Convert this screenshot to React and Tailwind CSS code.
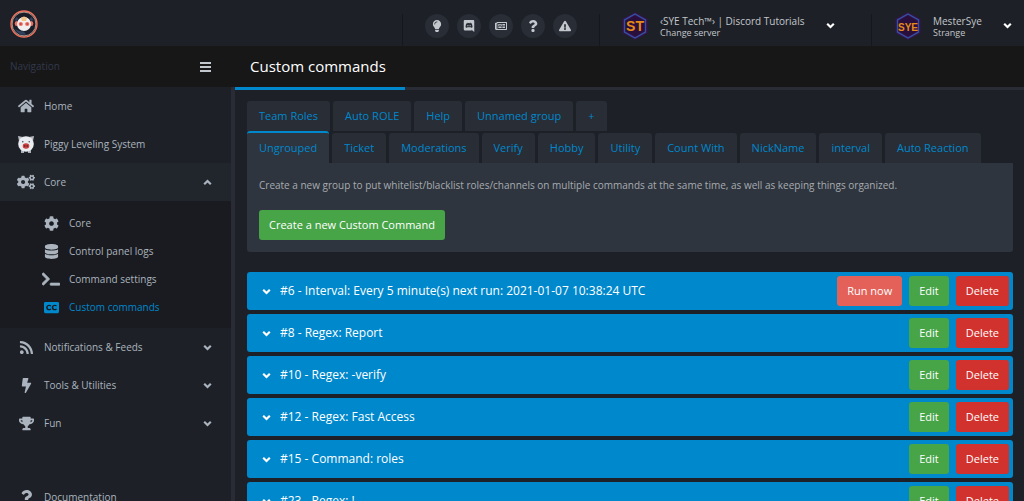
import {
  FaLightbulb, FaRegNewspaper, FaQuestion, FaExclamationTriangle, FaHome,
  FaCogs, FaCog, FaDatabase, FaTerminal, FaClosedCaptioning, FaRss, FaBolt,
  FaTrophy,
} from 'react-icons/fa';

function DiscordIcon({ className }) {
  return (
    <svg className={className} viewBox="0 0 448 512" fill="currentColor" aria-hidden="true">
      <path d="M297.216 243.2c0 15.616-11.52 28.416-26.112 28.416-14.336 0-26.112-12.8-26.112-28.416s11.52-28.416 26.112-28.416c14.592 0 26.112 12.8 26.112 28.416zm-119.552-28.416c-14.592 0-26.112 12.8-26.112 28.416s11.776 28.416 26.112 28.416c14.592 0 26.112-12.8 26.112-28.416.256-15.616-11.52-28.416-26.112-28.416zM448 52.736V512c-64.494-56.994-43.868-38.128-118.784-107.776l13.568 47.36H52.48C23.552 451.584 0 428.032 0 398.848V52.736C0 23.552 23.552 0 52.48 0h343.04C424.448 0 448 23.552 448 52.736zm-72.96 242.688c0-82.432-36.864-149.248-36.864-149.248-36.864-27.648-71.936-26.88-71.936-26.88l-3.584 4.096c43.52 13.312 63.744 32.512 63.744 32.512-60.811-33.329-132.244-33.335-191.232-7.424-9.472 4.352-15.104 7.424-15.104 7.424s21.248-20.224 67.328-33.536l-2.56-3.072s-35.072-.768-71.936 26.88c0 0-36.864 66.816-36.864 149.248 0 0 21.504 37.12 78.08 38.912 0 0 9.472-11.52 17.152-21.248-32.512-9.728-44.8-30.208-44.8-30.208 3.766 2.636 9.976 6.053 10.496 6.4 43.21 24.198 104.588 32.126 159.744 8.96 8.96-3.328 18.944-8.192 29.44-15.104 0 0-12.8 20.992-46.336 30.464 7.68 9.728 16.896 20.736 16.896 20.736 56.576-1.792 78.336-38.912 78.336-38.912z" />
    </svg>
  );
}

function Chevron({ up, className = '' }) {
  return (
    <svg className={`size-[9px] shrink-0 ${className}`} viewBox="0 0 9 9" fill="none" stroke="currentColor" strokeWidth="2.2" aria-hidden="true">
      <path d={up ? 'M1.200 6.200L4.500 3l3.300 3.200' : 'M1.200 2.800L4.500 6l3.300-3.200'} />
    </svg>
  );
}

function MenuIcon() {
  return (
    <svg className="h-[10px] w-[11px]" viewBox="0 0 11 10" fill="currentColor" aria-hidden="true">
      <path d="M0 0h11v2H0zM0 4h11v2H0zM0 8h11v2H0z" />
    </svg>
  );
}

function Logo() {
  return (
    <svg className="size-7" viewBox="0 0 28 28" aria-hidden="true">
      <circle cx="14" cy="14" r="13" fill="#191d28" stroke="#f0705c" strokeWidth="1.4" />
      <circle cx="14" cy="14" r="11.9" fill="none" stroke="#e8cdb8" strokeWidth="0.7" />
      <path d="M5 19q4 7 11 5.500l-2-3q-5 0-9-2.500z" fill="#30405f" />
      <path d="M4.500 10l2-3 2 2-2 2zM23.500 10l-2-3-2 2 2 2z" fill="#30405f" />
      <ellipse cx="6.500" cy="13.500" rx="1.800" ry="2.600" fill="#ee6d5f" />
      <ellipse cx="21.500" cy="13.500" rx="1.800" ry="2.600" fill="#ee6d5f" />
      <circle cx="14" cy="14" r="7" fill="#f1efef" />
      <path d="M11 8q3-3 6 0l-1 3h-4z" fill="#f2c489" />
      <circle cx="10.800" cy="14" r="2.100" fill="#ee6d5f" />
      <circle cx="17.200" cy="14" r="2.100" fill="#ee6d5f" />
      <circle cx="10.800" cy="14" r="0.700" fill="#a52f38" />
      <circle cx="17.200" cy="14" r="0.700" fill="#a52f38" />
    </svg>
  );
}

function PiggyIcon() {
  return (
    <svg className="size-[18px]" viewBox="0 0 18 18" aria-hidden="true">
      <path d="M1 1l5 1-4 4zM17 1l-5 1 4 4z" fill="#b9bcc2" />
      <path d="M4 14h3v4H4zM11 14h3v4h-3z" fill="#a9adb5" />
      <circle cx="9" cy="9" r="7.800" fill="#e9edf1" />
      <circle cx="5.800" cy="6.800" r="0.700" fill="#333" />
      <circle cx="12.200" cy="6.800" r="0.700" fill="#333" />
      <ellipse cx="9" cy="11" rx="3.300" ry="2.800" fill="#c9403f" />
      <path d="M7.800 10v2M10.200 10v2" stroke="#5d1d22" strokeWidth="0.900" />
    </svg>
  );
}

function HexAvatar({ label, size }) {
  return (
    <svg className="h-[28px] w-[26px] shrink-0" viewBox="0 0 26 28" aria-hidden="true">
      <path d="M13 2l11 6v12l-11 6-11-6V8z" fill="#2a0f3c" stroke="#3a1250" strokeWidth="3" />
      <path d="M13 2l10.500 6v12L13 26 2.500 20V8z" fill="none" stroke="#2f55a0" strokeWidth="1.300" />
      <text x="13" y="18.500" textAnchor="middle" fontFamily="Liberation Sans, sans-serif" fontWeight="bold" fontSize={size} fill="#e58b17">
        {label}
      </text>
    </svg>
  );
}

const quickLinks = [
  { label: 'Tips', Icon: FaLightbulb },
  { label: 'Discord', Icon: DiscordIcon },
  { label: 'News', Icon: FaRegNewspaper },
  { label: 'Help', Icon: FaQuestion },
  { label: 'Status', Icon: FaExclamationTriangle },
];

const coreLinks = [
  { label: 'Core', Icon: FaCog },
  { label: 'Control panel logs', Icon: FaDatabase },
  { label: 'Command settings', Icon: FaTerminal, wide: true },
  { label: 'Custom commands', Icon: FaClosedCaptioning, active: true },
];

const sections = [
  { label: 'Notifications & Feeds', Icon: FaRss },
  { label: 'Tools & Utilities', Icon: FaBolt },
  { label: 'Fun', Icon: FaTrophy },
];

const topTabs = ['Team Roles', 'Auto ROLE', 'Help', 'Unnamed group', '+'];
const groupTabs = ['Ungrouped', 'Ticket', 'Moderations', 'Verify', 'Hobby', 'Utility', 'Count With', 'NickName', 'interval', 'Auto Reaction'];

const commands = [
  { title: '#6 - Interval: Every 5 minute(s) next run: 2021-01-07 10:38:24 UTC', run: true },
  { title: '#8 - Regex: Report' },
  { title: '#10 - Regex: -verify' },
  { title: '#12 - Regex: Fast Access' },
  { title: '#15 - Command: roles' },
  { title: '#23 - Regex: !' },
];

function TopBar() {
  return (
    <header className="flex h-[46px] shrink-0 items-stretch justify-between bg-[#1d2127]">
      <a href="#home" aria-label="Dashboard" className="flex items-center pt-0.5 pl-2.5">
        <Logo />
      </a>
      <div className="flex items-end">
        <nav className="flex h-8 items-center gap-2 border-l border-[#14171c] px-[22px] pb-[9px]">
          {quickLinks.map(({ label, Icon }) => (
            <a key={label} href="#link" aria-label={label} className="flex size-6 items-center justify-center rounded-full bg-[#282d36] text-[#c3c8ce]">
              <Icon className="size-3" />
            </a>
          ))}
        </nav>
        <button type="button" className="flex h-8 w-[272px] items-center border-l border-[#14171c] pb-[9px] pl-[22px] text-left">
          <HexAvatar label="ST" size={14} />
          <span className="ml-3 flex flex-col text-[#c3c6cb]">
            <span className="text-[10px] leading-[14px] whitespace-nowrap">‹SYE Tech™› | Discord Tutorials</span>
            <span className="text-[9px] leading-[10px]">Change server</span>
          </span>
          <Chevron className="ml-[22px] text-white" />
        </button>
        <button type="button" className="flex h-8 w-[153px] items-center border-l border-[#14171c] pb-[9px] pl-[23px] text-left">
          <HexAvatar label="SYE" size={10} />
          <span className="ml-3 flex flex-col text-[#c3c6cb]">
            <span className="text-[10px] leading-[14px]">MesterSye</span>
            <span className="text-[9px] leading-[10px]">Strange</span>
          </span>
          <Chevron className="mr-3 ml-auto text-white" />
        </button>
      </div>
    </header>
  );
}

function SideItem({ label, icon, chevron, active }) {
  return (
    <a
      href="#section"
      className={`flex h-[38px] shrink-0 items-center pr-[19px] pl-[17px] text-[10px] text-[#abb4be] ${active ? 'bg-[#21262d]' : ''}`}
    >
      <span className="flex w-[18px] justify-center">{icon}</span>
      <span className="ml-[9px] flex-1">{label}</span>
      {chevron}
    </a>
  );
}

function Sidebar() {
  return (
    <aside className="flex w-[235px] shrink-0 flex-col">
      <div className="flex h-[41px] shrink-0 items-center justify-between bg-[#171717] pr-6 pl-2.5 text-[10px] text-[#32394d]">
        Navigation
        <button type="button" aria-label="Toggle navigation" className="text-[#c3c8ce]">
          <MenuIcon />
        </button>
      </div>
      <nav className="flex min-h-0 flex-1 flex-col overflow-hidden border-r-4 border-[#2a2c35] bg-[#1d2127]">
        <SideItem label="Home" icon={<FaHome className="size-4" />} />
        <SideItem label="Piggy Leveling System" icon={<PiggyIcon />} />
        <SideItem label="Core" active icon={<FaCogs className="size-[18px]" />} chevron={<Chevron up />} />
        <div className="flex shrink-0 flex-col bg-[#191b20] pt-2 pb-[7px]">
          {coreLinks.map(({ label, Icon, active, wide }) => (
            <a
              key={label}
              href="#page"
              className={`flex h-7 items-center pl-[42px] text-[10px] ${active ? 'text-[#0088cc]' : 'text-[#abb4be]'}`}
            >
              <span className="flex w-[18px] justify-center">
                <Icon className={wide ? 'size-[18px] stroke-current stroke-[24]' : 'size-[15px]'} />
              </span>
              <span className="ml-[9px]">{label}</span>
            </a>
          ))}
        </div>
        {sections.map(({ label, Icon }) => (
          <SideItem key={label} label={label} icon={<Icon className="size-[15px]" />} chevron={<Chevron />} />
        ))}
        <div className="h-9 shrink-0" />
        <SideItem label="Documentation" icon={<FaQuestion className="size-[15px]" />} />
      </nav>
    </aside>
  );
}

function TabRow({ tabs, selected }) {
  return (
    <div role="tablist" className="flex items-end gap-[3px]">
      {tabs.map((tab) => (
        <button
          key={tab}
          type="button"
          role="tab"
          aria-selected={tab === selected}
          className={`rounded-t-[3px] px-3 text-[11px] leading-[30px] whitespace-nowrap text-[#0088cc] ${
            tab === selected ? 'border-t-2 border-[#0088cc] bg-[#2e353e]' : 'bg-[#282d36]'
          }`}
        >
          {tab}
        </button>
      ))}
    </div>
  );
}

function CommandRow({ title, run }) {
  const button = 'h-[30px] rounded-[3px] px-2.5 text-[11px] text-white';
  return (
    <li className="flex h-[38px] shrink-0 items-center rounded-[3px] bg-[#0088cc] pr-1 pl-[15px]">
      <button type="button" className="flex flex-1 items-center gap-[9px] text-left text-xs text-white">
        <Chevron />
        {title}
      </button>
      <div className="flex gap-[7px]">
        {run && <button type="button" className={`${button} bg-[#e36159]`}>Run now</button>}
        <button type="button" className={`${button} bg-[#47a447]`}>Edit</button>
        <button type="button" className={`${button} bg-[#d2322d]`}>Delete</button>
      </div>
    </li>
  );
}

export default function App() {
  return (
    <div className="flex h-screen flex-col overflow-hidden bg-[#1d2127] font-['Open_Sans',sans-serif]">
      <TopBar />
      <div className="flex min-h-0 flex-1">
        <Sidebar />
        <main className="flex min-w-0 flex-1 flex-col">
          <div className="flex h-11 shrink-0 border-b-[3px] border-[#2a2c35] bg-[#171717]">
            <h1 className="-mb-[3px] flex w-[170px] items-center border-b-[3px] border-[#0088cc] pl-[15px] text-[15px] whitespace-nowrap text-white">
              Custom commands
            </h1>
          </div>
          <div className="flex min-h-0 flex-1 flex-col overflow-hidden pt-[11px] pr-[11px] pl-3">
            <TabRow tabs={topTabs} />
            <TabRow tabs={groupTabs} selected="Ungrouped" />
            <section className="flex flex-col items-start rounded-b-[3px] bg-[#2e353e] px-3 pt-3 pb-3">
              <p className="text-[10px] leading-5 text-[#a8abb0]">
                Create a new group to put whitelist/blacklist roles/channels on multiple commands at the same time, as well as keeping things organized.
              </p>
              <button type="button" className="mt-[15px] h-[30px] rounded-[3px] bg-[#47a447] px-2.5 text-[11px] text-white">
                Create a new Custom Command
              </button>
            </section>
            <ul className="mt-5 flex flex-col gap-1">
              {commands.map((command) => (
                <CommandRow key={command.title} {...command} />
              ))}
            </ul>
          </div>
        </main>
      </div>
    </div>
  );
}
